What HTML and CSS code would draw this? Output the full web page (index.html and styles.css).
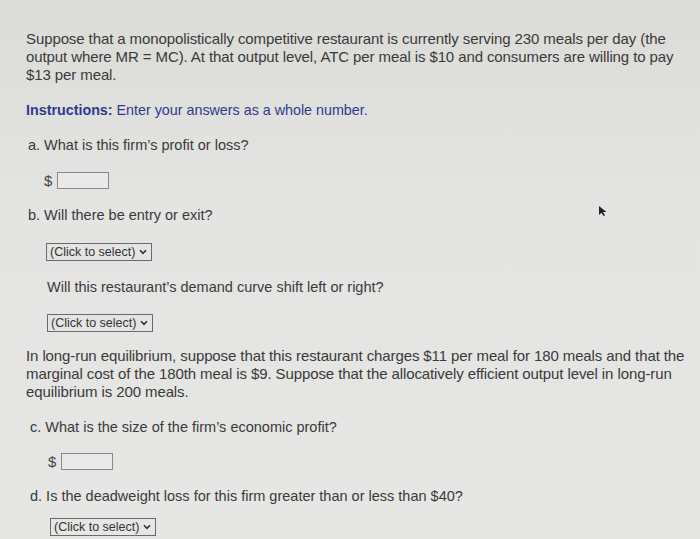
FILE: index.html
```html
<!DOCTYPE html>
<html>
<head>
<meta charset="utf-8">
<link rel="stylesheet" href="styles.css">
</head>
<body>
<div class="page">
  <p class="para p1">Suppose that a monopolistically competitive restaurant is currently serving 230 meals per day (the output where MR = MC). At that output level, ATC per meal is $10 and consumers are willing to pay $13 per meal.</p>
  <p class="instr"><b>Instructions:</b> Enter your answers as a whole number.</p>
  <p class="q qa">a. What is this firm’s profit or loss?</p>
  <div class="ans ans-a"><span class="dollar">$</span><span class="box"></span></div>
  <p class="q qb">b. Will there be entry or exit?</p>
  <div class="sel sel1"><span>(Click to select)</span><svg width="8" height="6" viewBox="0 0 8 6"><path d="M1 1.2 L4 4.4 L7 1.2" fill="none" stroke="#333" stroke-width="1.6"/></svg></div>
  <p class="q qb2">Will this restaurant’s demand curve shift left or right?</p>
  <div class="sel sel2"><span>(Click to select)</span><svg width="8" height="6" viewBox="0 0 8 6"><path d="M1 1.2 L4 4.4 L7 1.2" fill="none" stroke="#333" stroke-width="1.6"/></svg></div>
  <p class="para p2">In long-run equilibrium, suppose that this restaurant charges $11 per meal for 180 meals and that the marginal cost of the 180th meal is $9. Suppose that the allocatively efficient output level in long-run equilibrium is 200 meals.</p>
  <p class="q qc">c. What is the size of the firm’s economic profit?</p>
  <div class="ans ans-c"><span class="dollar">$</span><span class="box"></span></div>
  <p class="q qd">d. Is the deadweight loss for this firm greater than or less than $40?</p>
  <div class="sel sel3"><span>(Click to select)</span><svg width="8" height="6" viewBox="0 0 8 6"><path d="M1 1.2 L4 4.4 L7 1.2" fill="none" stroke="#333" stroke-width="1.6"/></svg></div>
</div>
<div class="cursor"><svg width="10" height="12" viewBox="0 0 10 12"><path d="M1 1 L1 10 L3.5 7.8 L5.5 11 L7 10.2 L5 7 L8.5 7 Z" fill="#222"/></svg></div>
</body>
</html>
```
FILE: styles.css
```css
html, body {
  margin: 0;
  padding: 0;
}
body {
  width: 700px;
  height: 539px;
  overflow: hidden;
  background: linear-gradient(180deg, #dbdbd8 0%, #e4e4e2 40%, #e6e6e4 100%);
  font-family: "Liberation Sans", Arial, sans-serif;
  font-size: 15px;
  color: #3a3a3a;
  position: relative;
}
.page {
  display: flex;
  flex-direction: column;
  width: 676px;
  padding: 30px 0 0 26px;
}
p { margin: 0; }
.para {
  line-height: 18px;
  letter-spacing: -0.1px;
}
.instr {
  margin-top: 18px;
  font-size: 14.3px;
  color: #2f3a8f;
}
.instr b { font-weight: bold; }
.q { line-height: 18px; font-size: 14.5px; }
.qa { margin-top: 18px; margin-left: 2px; }
.ans {
  display: flex;
  align-items: center;
  margin-top: 18px;
  gap: 5px;
}
.ans-a { margin-left: 18px; }
.ans-c { margin-left: 22px; margin-top: 17px; }
.dollar { font-size: 15px; color: #444; }
.box {
  width: 50px;
  height: 15px;
  border: 1px solid #8a8a8a;
  background: #e9e9e7;
}
.qb { margin-top: 17px; margin-left: 2px; }
.sel {
  display: flex;
  align-items: center;
  gap: 4px;
  align-self: flex-start;
  height: 16px;
  padding: 0 4px 0 3px;
  border: 1px solid #6a6a6a;
  font-size: 12.5px;
  color: #333;
}
.sel1 { margin-top: 19px; margin-left: 20px; }
.qb2 { margin-top: 17px; margin-left: 21px; }
.sel2 { margin-top: 18px; margin-left: 21px; }
.p2 { margin-top: 15px; }
.qc { margin-top: 17px; margin-left: 4px; }
.qd { margin-top: 17px; margin-left: 4px; }
.sel3 { margin-top: 13px; margin-left: 24px; }
.cursor {
  position: absolute;
  left: 598px;
  top: 203px;
}
```
